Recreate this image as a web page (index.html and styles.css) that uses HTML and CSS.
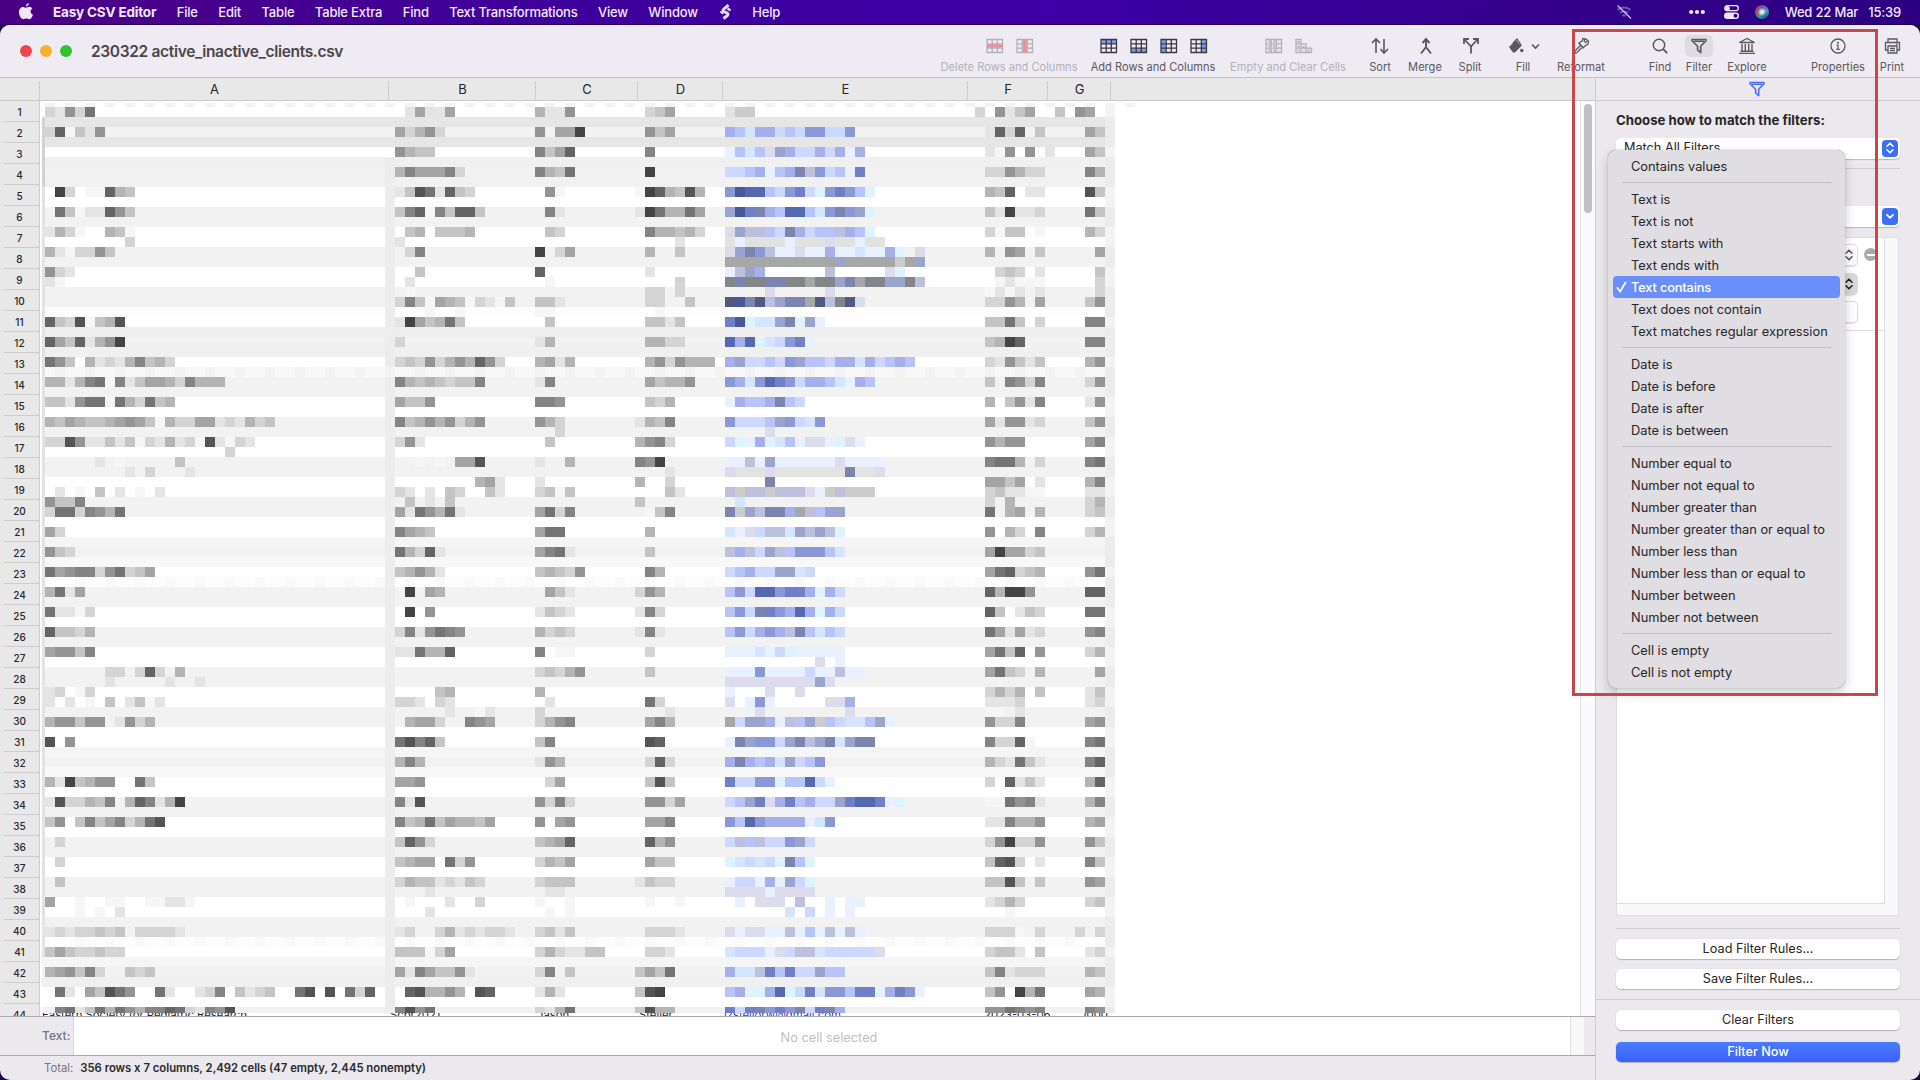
FILE: index.html
```html
<!DOCTYPE html>
<html lang="en">
<head>
<meta charset="utf-8">
<title>Easy CSV Editor</title>
<link rel="stylesheet" href="styles.css">
</head>
<body>
<svg width="0" height="0" class="defs">
  <defs>
    <symbol id="grid" viewBox="0 0 18 16"><path d="M1 1.500h15.500v13H1zM1 5.800h15.500M1 10.200h15.500M6.200 1.500v13M11.300 1.500v13" fill="none" stroke="currentColor" stroke-width="1.300"/></symbol>
    <symbol id="funnel" viewBox="0 0 18 16"><path d="M2 1.500h14v1.200l-5.300 5.600v6.400L7.600 12V8.300L2 2.700z" fill="none" stroke="currentColor" stroke-width="1.600" stroke-linejoin="round"/><path d="M4 3.200h10" stroke="currentColor" stroke-width="1.400"/></symbol>
    <symbol id="updown" viewBox="0 0 16 16"><path d="M5 6.200L8 3.200l3 3M5 9.800l3 3 3-3" fill="none" stroke="currentColor" stroke-width="1.600" stroke-linecap="round" stroke-linejoin="round"/></symbol>
  </defs>
</svg>
<header class="menubar">
  <nav class="menus">
    <svg class="apple" width="16" height="18" viewBox="0 0 16 18"><path d="M10.900 0c.1 1.600-1.300 3.400-3 3.400C7.700 1.800 9.300.2 10.900 0zM8 4.700c.7 0 1.600-.9 3.200-.9 1.300 0 2.400.6 3.200 1.600-2.700 1.600-2.200 5.300.6 6.300-.7 2-2.100 4.600-3.700 4.600-1.200 0-1.600-.7-3-.7s-1.900.7-3 .7C3.300 16.300 1 12.600 1 9.300c0-3.400 2-5.400 4-5.400 1.400 0 2.400.8 3 .8z" fill="#f1e9fb"/></svg>
    <b class="app">Easy CSV Editor</b><span>File</span><span>Edit</span><span>Table</span><span>Table Extra</span><span>Find</span><span>Text Transformations</span><span>View</span><span>Window</span>
    <svg class="script" width="13" height="16" viewBox="0 0 13 16"><path d="M9.500 1L5 4.800c-1.500 1.300-.8 2.500.8 3.200l2 .9c1.600.8 1.400 2 .2 3L4.500 14.500" fill="none" stroke="#e6dcf6" stroke-width="3"/><path d="M1.500 7.500l3 2M8.500 4.500l3 2" stroke="#e6dcf6" stroke-width="2.400"/></svg>
    <span>Help</span>
  </nav>
  <div class="tray">
    <svg class="wifi" width="16" height="14" viewBox="0 0 16 14"><path d="M1.500 5a9.500 9.500 0 0 1 13 0M4 8a6 6 0 0 1 8 0M6.600 11a2 2 0 0 1 2.800 0" fill="none" stroke="#7459b8" stroke-width="2"/><path d="M1.500.5l13.500 13" stroke="#d4c8ee" stroke-width="1.200"/></svg>
    <svg class="dots" width="16" height="6" viewBox="0 0 16 6"><g fill="#f1e9fb"><circle cx="2.200" cy="3" r="2.100"/><circle cx="8" cy="3" r="2.100"/><circle cx="13.800" cy="3" r="2.100"/></g></svg>
    <svg class="cc" width="15" height="14" viewBox="0 0 15 14"><rect x=".7" y=".7" width="13.600" height="5" rx="2.500" fill="none" stroke="#f1e9fb" stroke-width="1.300"/><circle cx="3.500" cy="3.200" r="2.300" fill="#f1e9fb"/><rect y="7.600" width="15" height="6.400" rx="3.200" fill="#f1e9fb"/><circle cx="11.500" cy="10.800" r="2" fill="#33008c"/></svg>
    <i class="siri"></i><span class="date">Wed 22 Mar</span><span class="time">15:39</span>
  </div>
</header>
<main class="window">
  <section class="toolbar">
    <div class="lights"><i class="red"></i><i class="amber"></i><i class="green"></i></div>
    <h1>230322 active_inactive_clients.csv</h1>
    <div class="tools">
      <div class="tool off"><div class="icons"><svg width="18" height="16"><use href="#grid"/><path d="M1 8h15.500" stroke="#e7939c" stroke-width="3.400"/></svg><svg width="18" height="16"><use href="#grid"/><path d="M8.800 1v14" stroke="#e7939c" stroke-width="4"/></svg></div><span>Delete Rows and Columns</span></div>
      <div class="tool dark"><div class="icons"><svg width="18" height="16"><path d="M1 3.800h15.500" stroke="#7d9fe6" stroke-width="4"/><use href="#grid"/></svg><svg width="18" height="16"><path d="M1 12.500h15.500" stroke="#7d9fe6" stroke-width="4"/><use href="#grid"/></svg><svg width="18" height="16"><path d="M3.500 1v14" stroke="#7d9fe6" stroke-width="4.500"/><use href="#grid"/></svg><svg width="18" height="16"><path d="M14 1v14" stroke="#7d9fe6" stroke-width="4.500"/><use href="#grid"/></svg></div><span>Add Rows and Columns</span></div>
      <div class="tool off"><div class="icons"><svg width="18" height="16"><use href="#grid"/><path d="M3.500 3.500h10M3.500 8h10M3.500 12.500h10" stroke="currentColor" stroke-width="2" stroke-dasharray="2 2.800"/></svg><svg width="18" height="16"><path d="M1 1.500h5v4.300h5v4.400h5.500v4.300H1zM1 5.800h5v8.700M1 10.200h10v4.300" fill="none" stroke="currentColor" stroke-width="1.300"/><path d="M3.500 3v10M8.500 8v5M13.500 11.500v2" stroke="currentColor" stroke-width="2" stroke-dasharray="2 2.400"/></svg></div><span>Empty and Clear Cells</span></div>
      <div class="tool"><div class="icons one"><svg width="18" height="18" viewBox="0 0 18 18"><path d="M5 16V2M1 6l4-4 4 4M13 2v14M9.500 12l3.500 4 4-4" fill="none" stroke="currentColor" stroke-width="1.600"/></svg></div><span>Sort</span></div>
      <div class="tool"><div class="icons"><svg width="16" height="18" viewBox="0 0 16 18"><path d="M8 2v8L3 16.500M8 10l5 6.500M4.500 6L8 2l3.500 4" fill="none" stroke="currentColor" stroke-width="1.900"/></svg></div><span>Merge</span></div>
      <div class="tool"><div class="icons"><svg width="18" height="18" viewBox="0 0 18 18"><path d="M9 16.500V9.500L3 3M9 9.500L15 3M2 7V2h5M11 2h5v5" fill="none" stroke="currentColor" stroke-width="1.800"/></svg></div><span>Split</span></div>
      <div class="tool"><div class="icons fill"><svg width="16" height="16" viewBox="0 0 16 16"><path d="M1 9L8 2l5.500 6-6 6c-1 .8-2 .8-3 0z" fill="currentColor"/><path d="M5 5L9 1l4.500 6.500" fill="none" stroke="currentColor" stroke-width="1.200"/><circle cx="13.800" cy="12.500" r="1.700" fill="currentColor"/></svg><svg width="9" height="7" viewBox="0 0 9 7"><path d="M1 1.500l3.500 3.500L8 1.500" fill="none" stroke="currentColor" stroke-width="1.700"/></svg></div><span>Fill</span></div>
      <div class="tool"><div class="icons one"><svg width="17" height="18" viewBox="0 0 17 18"><path d="M6 6l4 4.500M6 6l3-2 1-2.500L13 2l2.500 2-.5 3-3 2-2 2-4-4.500zM7 9l-5 5c-.7 1.500.5 2.500 1.800 1.800L8.500 11M12 2l-1 3M14 4l-2 2" fill="none" stroke="currentColor" stroke-width="1.300"/></svg></div><span>Reformat</span></div>
      <i></i>
      <div class="tool"><div class="icons one"><svg width="18" height="18" viewBox="0 0 18 18"><circle cx="8" cy="8" r="5.700" fill="none" stroke="currentColor" stroke-width="1.500"/><path d="M12.200 12.200l4 4" stroke="currentColor" stroke-width="1.900"/></svg></div><span>Find</span></div>
      <div class="tool"><div class="icons one pressed"><svg width="18" height="16"><use href="#funnel"/></svg></div><span>Filter</span></div>
      <div class="tool"><div class="icons one"><svg width="18" height="18" viewBox="0 0 18 18"><path d="M1.500 5.500L9 1.500l7.500 4zM4 7v7M7.300 7v7M10.700 7v7M14 7v7M2.500 14.200h13M1 16.400h16" fill="none" stroke="currentColor" stroke-width="1.400"/></svg></div><span>Explore</span></div>
      <i></i>
      <div class="tool"><div class="icons one"><svg width="16" height="16" viewBox="0 0 16 16"><circle cx="8" cy="8" r="7" fill="none" stroke="currentColor" stroke-width="1.300"/><circle cx="8" cy="4.700" r="1" fill="currentColor"/><path d="M6.500 7.200H8v4M6.200 11.400h3.600" fill="none" stroke="currentColor" stroke-width="1.300"/></svg></div><span>Properties</span></div>
      <div class="tool"><div class="icons one"><svg width="17" height="16" viewBox="0 0 17 16"><path d="M4 4V1h9v3M3.500 12H1.500V4.500h14V12h-2M4 8h9v7H4zM6 10.500h5M6 12.700h5M12 6.300h1.500" fill="none" stroke="currentColor" stroke-width="1.300"/></svg></div><span>Print</span></div>
    </div>
  </section>
  <div class="content">
    <section class="sheet">
      <div class="colheads"><span></span><span>A</span><span>B</span><span>C</span><span>D</span><span>E</span><span>F</span><span>G</span></div>
      <div class="gridarea">
        <div class="rowheads" id="rowheads"></div>
        <div class="cells">
          <div class="lastrow"><span>Eastern Society for Pediatric Research</span><span>Scbr2021</span><span>Jason</span><span>Steller</span><a>izstellorw@gmail.com</a><span>2023-03-06</span><span>1000</span></div>
          <svg id="mosaic" class="mosaic" width="1123" height="910" shape-rendering="crispEdges"></svg>
        </div>
        <div class="track"><i></i></div>
      </div>
      <div class="textrow"><label>Text:</label><div class="field">No cell selected</div><i></i></div>
      <div class="status"><span>Total:</span><b>356 rows x 7 columns, 2,492 cells (47 empty, 2,445 nonempty)</b></div>
    </section>
    <aside class="panel">
      <div class="tab"><svg width="18" height="16"><use href="#funnel"/></svg></div>
      <div class="rules">
        <h2>Choose how to match the filters:</h2>
        <div class="select match"><span>Match All Filters</span><em><svg width="16" height="16"><use href="#updown"/></svg></em></div>
        <hr>
        <div class="select combo"><em><svg width="16" height="16" viewBox="0 0 16 16"><path d="M5 6.800l3 3 3-3" fill="none" stroke="#fff" stroke-width="1.800" stroke-linecap="round"/></svg></em></div>
        <div class="list"><div class="inner">
          <div class="rule"><div class="mini"><svg width="16" height="16"><use href="#updown"/></svg></div><i class="minus"></i></div>
          <div class="rule"><div class="mini gray"><svg width="16" height="16"><use href="#updown"/></svg></div></div>
          <div class="rule"><div class="mini"></div></div>
        </div></div>
        <hr class="after">
        <button>Load Filter Rules...</button>
        <button>Save Filter Rules...</button>
      </div>
      <div class="actions"><button>Clear Filters</button><button class="primary">Filter Now</button></div>
    </aside>
  </div>
</main>
<div class="popup">
  <p>Contains values</p><hr>
  <p>Text is</p><p>Text is not</p><p>Text starts with</p><p>Text ends with</p>
  <p class="on"><svg width="11" height="12" viewBox="0 0 11 12"><path d="M1.200 6.800l3 3.700L9.500 1.500" fill="none" stroke="#fff" stroke-width="1.700" stroke-linecap="round"/></svg>Text contains</p>
  <p>Text does not contain</p><p>Text matches regular expression</p><hr>
  <p>Date is</p><p>Date is before</p><p>Date is after</p><p>Date is between</p><hr>
  <p>Number equal to</p><p>Number not equal to</p><p>Number greater than</p><p>Number greater than or equal to</p><p>Number less than</p><p>Number less than or equal to</p><p>Number between</p><p>Number not between</p><hr>
  <p>Cell is empty</p><p>Cell is not empty</p>
</div>
<div class="highlight"></div>
<script src="sheet.js"></script>
</body>
</html>
```
FILE: styles.css
```css
* { box-sizing: border-box; }
body { margin: 0; width: 1920px; height: 1080px; overflow: hidden; background: #1b0a45; font: 12.7px Inter, "Liberation Sans", sans-serif; color: #262628; position: relative; }
h1, h2, p { margin: 0; }
svg { display: block; flex: none; }
.defs { position: absolute; }
.menubar { height: 25px; background: linear-gradient(90deg, #4b0084, #3e009c 30%, #3d00a6 55%, #34008c 80%, #2c0080); display: flex; justify-content: space-between; color: #f1e9fb; border-bottom: 1px solid #22005c; font-size: 13px; font-weight: 500; letter-spacing: -.18px; }
.menus { display: flex; align-items: center; padding-left: 18px; white-space: nowrap; }
.menus span { margin-left: 20.4px; }
.menus .app { margin-left: 19px; font-weight: 700; font-size: 13.5px; }
.menus .script { margin-left: 21px; }
.tray { display: flex; align-items: center; padding-right: 19px; }
.dots { margin-left: 57px; }
.cc { margin-left: 19px; }
.siri { width: 14px; height: 14px; border-radius: 50%; margin-left: 16px; background: radial-gradient(circle, #d9f2f2 0 12%, transparent 45%), conic-gradient(#7a4fa0, #4f8fc0, #2b5f98, #2f9f86, #c23a66, #7a4fa0); }
.date { margin-left: 16px; }
.time { margin-left: 10px; }
.window { height: 1055px; display: flex; flex-direction: column; border-radius: 10px; overflow: hidden; background: #ebe9ee; }
.toolbar { height: 53px; flex: none; display: flex; align-items: center; background: #efebf3; border-bottom: 1px solid #c4c1c9; }
.lights { display: flex; gap: 8px; padding-left: 20px; width: 91px; }
.lights i { width: 12px; height: 12px; border-radius: 50%; }
.red { background: #ed4550; } .amber { background: #f4b32b; } .green { background: #30c22f; }
h1 { font-size: 15.5px; font-weight: 600; color: #48464b; width: 843px; letter-spacing: -.33px; }
.tools { display: grid; grid-template-columns: 150px 138px 132px 52px 38px 52px 54px 62px 28px 40px 38px 58px 30px 64px 44px; height: 100%; }
.tool { display: flex; flex-direction: column; align-items: center; color: #5a585e; font-size: 11.1px; padding-top: 10px; white-space: nowrap; }
.tool span { line-height: 18px; margin-top: 1px; }
.icons { height: 22px; display: flex; gap: 12px; align-items: center; padding-left: 1px; }
.icons.one { padding-left: 0; }
.dark .icons { color: #3a3940; }
.off { color: #b3b0b7; }
.icons.fill { gap: 7px; }
.pressed { background: #dfdbe3; border-radius: 5px; width: 28px; justify-content: center; }
.content { flex: 1; display: flex; min-height: 0; }
.sheet { width: 1595px; display: flex; flex-direction: column; }
.colheads { height: 23px; background: #e8e8e8; border-bottom: 1px solid #c9c9c9; display: grid; grid-template-columns: 40px 349px 147px 102px 85px 245px 80px 63px; }
.colheads span { border-right: 1px solid #cdcdcd; display: flex; align-items: center; justify-content: center; margin-top: 3px; padding-bottom: 3px; padding-left: 1px; font-size: 13px; }
.gridarea { height: 915px; display: flex; background: #fff; overflow: hidden; }
.rowheads { width: 40px; background: #e8e8e8; border-right: 1px solid #cdcdcd; padding-left: 4px; }
.rowheads div { height: 21px; line-height: 22px; border-bottom: 1px solid #cdcdcd; font-size: 10px; font-weight: 500; text-align: center; padding-right: 4px; }
.cells { flex: 1; position: relative; overflow: hidden; }
.mosaic { position: absolute; left: 2px; top: 2px; }
.lastrow { position: absolute; left: 2px; top: 904px; display: grid; grid-template-columns: 348px 147px 102px 85px 260px 98px 60px; font-size: 11.3px; line-height: 20px; white-space: nowrap; }
.lastrow a { color: #2c3ccc; text-decoration: underline; }
.track { width: 15px; border-left: 1px solid #e6e6e6; background: #fafafa; padding: 3px; }
.track i { display: block; width: 8px; height: 109px; border-radius: 4px; background: #c1c1c1; }
.textrow { height: 40px; border: solid #a9a8ac; border-width: 1px 0; display: flex; }
.textrow label { width: 74px; padding-left: 42px; line-height: 38px; color: #77757b; font-weight: 500; font-size: 12px; border-right: 1px solid #dcdade; }
.field { flex: 1; background: #fff; line-height: 41px; text-align: center; color: #c1c0c3; font-size: 12.8px; padding-left: 14px; }
.textrow i { width: 14px; margin-right: 11px; border-left: 1px solid #e0e0e0; background: #f8f8f8; }
.status { flex: 1; display: flex; align-items: center; gap: 7px; padding-left: 44px; font-size: 11.3px; color: #77757b; }
.status b { color: #29282b; font-weight: 600; }
.panel { flex: 1; border-left: 1px solid #cfccd3; display: flex; flex-direction: column; }
.tab { height: 23px; flex: none; border-bottom: 1px solid #cfccd3; display: flex; justify-content: center; align-items: center; color: #4b6cf2; padding-right: 2px; }
.rules { height: 899px; flex: none; padding: 8px 20px 0; border-bottom: 1px solid #cfccd3; display: flex; flex-direction: column; }
h2 { font-size: 13.2px; line-height: 23px; font-weight: 700; white-space: nowrap; }
hr { border: 0; border-top: 1px solid #cfccd3; margin: 0; width: 284px; }
.select { height: 21px; flex: none; width: 284px; background: #fff; border-radius: 5px; box-shadow: 0 1px 1px #b9b7bd; display: flex; align-items: center; padding: 0 2px 1px 8px; }
.select em { width: 16px; height: 17px; border-radius: 4px; background: #3c6ff8; color: #fff; margin-left: auto; }
.match { margin: 6px 0 9px; line-height: 18px; }
.combo { margin-top: 37px; }
.list { margin-top: 10px; height: 679px; flex: none; width: 283px; border: 1px solid #dfdde2; background: #f9f9f9; }
.inner { width: 268px; height: 666px; background: #fff; border: solid #dfdde2; border-width: 0 1px 1px 0; padding-top: 2px; }
.rule { display: flex; height: 29px; align-items: center; }
.rule:last-child { height: 33px; padding-bottom: 4px; border-bottom: 1px solid #dfdde2; }
.mini { width: 241px; height: 22px; border: 1px solid #dedce0; border-radius: 5px; display: flex; align-items: center; justify-content: flex-end; color: #5c5b5f; box-shadow: 0 1px 1px #e4e2e6; }
.gray { background: #d9d8da; color: #222; }
.minus { width: 13px; height: 13px; margin-left: 6px; border-radius: 50%; background: linear-gradient(#fff, #fff) center/8px 2px no-repeat #aaa; }
.after { margin: 12px 0 10px; }
button { font: inherit; height: 20px; flex: none; width: 284px; border: 0; border-radius: 5px; background: #fff; color: #262628; box-shadow: 0 1px 1px #b5b3b8, 0 0 1px #c6c4c8; padding: 0; margin-bottom: 10px; line-height: 20px; }
.actions { padding: 10px 20px 0; }
.actions button { display: block; margin-bottom: 12px; }
.actions .primary { background: linear-gradient(#4a7bff, #3a62fb); color: #fff; font-weight: 500; margin-bottom: 0; }
.popup { position: absolute; left: 1608px; top: 150px; width: 237px; height: 538px; padding: 5px; background: #e0dde3; border-radius: 8px; box-shadow: 0 0 1px #77747c, 0 5px 12px rgba(0,0,0,.2); }
.popup p { height: 22px; line-height: 23px; padding-left: 18px; white-space: nowrap; border-radius: 4px; font-size: 12.8px; }
.popup hr { width: 209px; margin: 5px 9px; border-color: #c0bdc4; }
.popup .on { background: #6a8ffb; color: #fff; font-weight: 500; letter-spacing: -.15px; display: flex; align-items: center; padding-left: 3px; gap: 4px; }
.highlight { position: absolute; left: 1572px; top: 29px; width: 306px; height: 667px; border: 3px solid #c94650; }
```
FILE: sheet.js
```js
// Row numbers down the left edge.
const heads = document.getElementById('rowheads');
for (let n = 1; n <= 44; n++) {
  const d = document.createElement('div');
  d.textContent = n;
  heads.append(d);
}

// Obscured cell contents: 10px blocks. Hex digits are greys, link letters use the palette.
const NS = 'http://www.w3.org/2000/svg';
const svg = document.getElementById('mosaic');
const palette = {a:'#e9f0ff',b:'#ccd8ff',c:'#b6c4fa',d:'#a4afec',e:'#8b98d8',f:'#6f80c6',g:'#5568b2',h:'#48589a',i:'#9aa4cc',j:'#bcc0dc',k:'#dcdcec',l:'#a6a8a8',m:'#828688',n:'#7c84b0',o:'#d4e6ff',p:'#ddf4ff',q:'#525a80',r:'#e2e2e0',s:'#cccccc'};
const bandColor = {W:'#ffffff',6:'#e6e6e6',2:'#f2f2f2',0:'#f0f0f0',1:'#f1f1f1',d:'#fdfdfd',e:'#eeeeee',8:'#f8f8f8',5:'#f5f5f5'};
const bands = 'W626W021WW22WW22WW22dWe20W822WW22WW22WW22WW528Wd22WW22WW22WW22WW528WW22WW22WW22WW22dW520WW1';
const starts = [0, 35, 49, 59, 68, 93, 103];
const rows = {
0:'de9d7|.eaeea|bee9|.dca|rss|d.9eca..c|9a',
2:'d6fce9|adb9d|9.aa4|.9ca|dcoddbcbeebbe|.e6d6.c|.ac',
4:'|9bcc|8ca6|.8|acockidbbdbdad|.ef9.9.e|.ac',
6:'|b8aaa8d|8bc7|.4|bbcdacdnjebcaf|.dd9bdd|.8b',
8:'.4d.ff6bc|ec57e6cd|.9f|f46bc5b|ehggcbefbpefecp|.bc6.ee|.5c',
10:'.7cfee69c|c86f8c66c|.8e|e47bb7a|ihfndcggcoeneip|.ce4eed|.7c',
12:'ebdf..bcf|.cb.cccb|.cd|.8bbcbd|kijjcbndbccjdcp|.dfcc.f|.bd',
13:'........d|e||....e|rarrrrarrrkrrarr||',
14:'befdd9c|.d8|4.da|.b..c|kinejaakaadaaoaadp.k|.b.9a.c|..a',
15:'||||lllllllllllilllllsli||',
16:'9de|..c|6|.e|ajid......j.....kp|..dcd.e|..c',
17:'ef|.e|.f|....d|mnmmnnmmlmminlmmiimj|..fefff|..d',
18:'|.f||.dd.d|....k.....k|.fefe.e|..d',
19:'|d8cfabcfdefc|cce|.dd..c|qhnqjinnlqjmqk|.dd9b.a|.c9',
20:'|...f..f|ff|..f|||',
21:'6cd5fcb5|e4acb7c|.c|.ccec|fhpooinpia|.cc7c.d|.88',
23:'6ac6eb94|d|eb|.bbdd|gdgpobefa|.cb46|.88',
25:'79c.bedeb8cbd|dcd9db9b69d|baeb|.b9d9bbb|dibbcbeiccbddodbcdc|.de9cec|.b9',
27:'bbeb87f8ecaabd8bbb|8bcbcdcc8|e8|.acbb9|edoegfebddcoadc|.c.89d8|.d9',
29:'cce977f7bd7cb|acc9|889|.cdb|adccdncb|.b.c9e8|.e9',
31:'bcabccba9acfbddaaedebdc|8cb9b9db9|9bd|ebc8|ebbbcieboe|.ae99ed|.c9',
32:'|....|..d||....k||',
33:'dd59eececfdebedf5efde|d9e|.c|b98d|bpadpocakkapka|.9b99|.a8',
34:'..................d||||||',
35:'.....e.f.....c|..f.f.aa5|e..b|894|aajaiaaaaaakaaaa|.877b.d|.87',
36:'........e.d...e|||...e|krrrkrrrrrrrnrrk||',
37:'|........bae|e|b..d|....n|.aaca.e|.b8',
38:'.e.f.c.e.f.e|de.e.cd..ce|dcfc|...ce|jsjjsjjjkasjsss|.dceeff|.ee',
39:'9cc8|.c.e.c||c|.o|.d.b|.db',
40:'d77d89b7|ae79b7e|a7d8|.fc8|nsijnndljcii|.7.ba.b|.dc',
42:'ad|8abc|a77|.b|oakbjjoijijp|.9.bd.8|.db',
44:'9cd|7bd6e|a87e|.c|jdjbijceeeco|.a4aadc|',
46:'7a988d97dca|cb9be|cbcd9|.8b|bcdbbiiob|.a76dcb|.97',
48:'b7ea|.4.ab|.ace|d9b|cebggeffdpdb|.6b449|.66',
50:'7eefd|.4.9|ecde|e8d|cebnfedgdpdb|.6c.ecd|.77',
52:'6ccdb|d8e9789|bdcd|e8e|cebdedjncocb|.7aeaed|.98',
54:'a99c8|ee7bb6|8.ff|.d|aaaoabpaaaaa|.a7c6.9|.db',
55:'||||.........k.a||',
56:'......dd.d6d.b||dcdb9|.c|aaaeaaaabaajaa|.a7cd.b|..a',
57:'......e.....e..e||||kkkkkkkkkik||',
58:'ed.fd|....cb|b||a...k..k|.dbdb.c|.ec',
59:'e.e.f.c.ecfe|dde.de|.e|.7d|k.aea.....kkd|.eeed|.ed',
60:'|.....e..fe|d|...e|...k........k|.ff.e|',
61:'b99c99.e9db|.baad..89a|db98|.a8b|lbiidajciscboocia|.9dd8|.a9',
63:'5.9|7586c|c8|.56|anieebinjinoinn|.8dd6f|.87',
65:'|b8b|e9b|.d6d|dndcdoibce|.bde7ce|.86',
67:'be4cb99..7c|aa9|.da|.c5c|fbbeepccgba|.d.6ece|.b6',
69:'e5ddbc8.b68eb4|8e5|9d8d|.99da|bcifkdfcdbbifggfap|.ff798e|.b8',
71:'c9.c8ca8db75|8cb7cabbca|9.a9|.aa8|ecgeddddaoe|.ee8bb9|.ba',
73:'.d|c69d|cba6|.6b9|bjcjbbeib|.d94dd9|.9c',
75:'.d|cbaa.7d9|dbca|.acc|pobobpncp|.c65d.e|.8c',
77:'.c|dbccedecd|dccc|ecdd|abbadaibp|.cc5c.c|.9a',
78:'|...e|.ee||kkkkakkkk||',
79:'a..f..ff..ffeef|.f...e..d|f..f|.f..f|.a.kkk.j..a.aa|.edbd|.dc',
80:'...f.f.e|...e|.f.f||......o.b.a.a|...f|',
82:'ededdcdc.dddde|ed..dbededde|dcec|.ddde|kakkaajacajaja|.dddf.d|d.d',
84:'cacddcdd|cccfda|dbdeecc|.dde|obbbakbjjobbbbbk|.dcce.c|.ed',
86:'ba9c8d..cdc|ae8acc9e|d8.c|cac7|doojfcfbbicc|.c8eddd|.bc',
88:'.7e.ac579..7e..ed8.cedc..75.5.7d6|.65bb9b.56|ebe|c54|cdppdgpbfoeecffadfea|.c9.4b7|.ab',
90:'.87ec7b79b8867de895|8597|deb7|c5bb|fbfnefenbfnd|.997898|.89'
};
// The drawing starts 42px from the window's left edge; blocks start 3px in and 4px down.
function block(x, y, w, h, fill) {
  const r = document.createElementNS(NS, 'rect');
  r.setAttribute('x', x); r.setAttribute('y', y);
  r.setAttribute('width', w); r.setAttribute('height', h);
  r.setAttribute('fill', fill);
  svg.append(r);
}
for (let i = 0; i < 110; i += 2) block(3 + i * 10, 0, 10, 4, '#f3f3f3');
[...bands].forEach((b, k) => {
  const y = 4 + k * 10, h = k === 90 ? 6 : 10;
  block(0, y, 1073, k === 90 ? 7 : h, bandColor[b]);
  if (k < 85 && k > 0) block(0, y, 3, h, k < 8 ? '#d2d2d2' : '#e3e3e3');
  if (k > 4) block(343, y, 10, h, b === 'W' ? '#ececec' : '#ededed');
  block(1063, y, 10, h, b === 'W' ? '#f3f3f3' : '#ececec');
  if (k === 26) for (let i = 1; i < 104; i += 3) block(3 + i * 10, y, 10, h, '#f3f3f3');
  if (k === 47 || k === 83) for (let i = 3; i < 104; i += 3) block(3 + i * 10, y, 10, h, '#f9f9f9');
  if (!rows[k]) return;
  rows[k].split('|').forEach((part, s) => [...part].forEach((c, i) => {
    if (c === '.') return;
    const fill = s === 4 ? palette[c] : c === 'f' ? '#f6f6f6' : '#' + c + '4' + c + '4' + c + '4';
    block(3 + (starts[s] + i) * 10, y, 10, h, fill);
  }));
});
```
